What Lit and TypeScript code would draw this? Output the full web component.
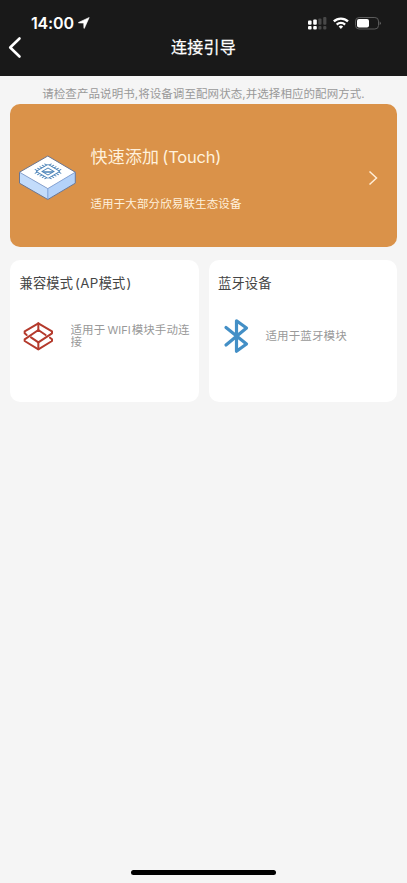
import { LitElement, html, css, svg } from "lit";
import { customElement } from "lit/decorators.js";

const chipPins = [0, 1, 2, 3, 4].map((i) => {
  const t = -8 + i * 4;
  return svg`<path d="M${t} -14V-10M${t} 10V14M-14 ${t}H-10M10 ${t}H14"/>`;
});

@customElement("app-root")
export class AppRoot extends LitElement {
  static styles = css`
    :host {
      display: flex;
      flex-direction: column;
      box-sizing: border-box;
      width: 100%;
      height: 883px;
      background: #f5f5f5;
      font-family: Inter, "Noto Sans CJK SC", sans-serif;
      overflow: hidden;
    }
    svg { display: block; flex: none; }
    .top { height: 76px; background: #191919; color: #fff; flex: none; }
    .status {
      height: 34px;
      padding: 12px 26px 0 31px;
      box-sizing: border-box;
      display: flex;
      align-items: center;
    }
    .time { font-size: 16px; font-weight: 600; line-height: 22px; letter-spacing: -0.15px; }
    .loc { margin-left: 4px; }
    .signals { margin-left: auto; }
    .nav {
      display: grid;
      grid-template-columns: 40px 1fr 40px;
      height: 26px;
      align-items: center;
    }
    .title { text-align: center; font-size: 16px; line-height: 26px; letter-spacing: 0.2px; font-weight: 400; -webkit-text-stroke: 0.25px #fff; }
    .hint {
      height: 28px;
      padding-top: 9px;
      box-sizing: border-box;
      text-align: center;
      font-size: 11.5px;
      line-height: 18px;
      letter-spacing: 0.07px;
      color: #999;
      white-space: nowrap;
      flex: none;
    }
    .cards {
      display: grid;
      grid-template-columns: 1fr 1fr;
      grid-template-rows: 143px 142px;
      gap: 13px 10px;
      padding: 0 10px;
    }
    .hero {
      grid-column: 1 / -1;
      background: #da9249;
      border-radius: 10px;
      display: flex;
      align-items: center;
      padding: 5px 19px 0 8px;
      color: #fff1dc;
    }
    .hero-text { flex: 1; margin-left: 12.5px; display: flex; flex-direction: column; gap: 25px; white-space: nowrap; }
    .hero-title { font-size: 17px; line-height: 26px; letter-spacing: 0.2px; }
    .hero-title .latin { margin-left: 3px; font-size: 16.5px; letter-spacing: -0.2px; }
    .hero-sub { font-size: 11.5px; line-height: 18px; letter-spacing: 0.12px; }
    .card {
      background: #fff;
      border-radius: 10px;
      padding: 13px 8px 0 9.5px;
      display: flex;
      flex-direction: column;
    }
    .card-title { font-size: 13.3px; line-height: 20px; letter-spacing: 0.1px; color: #454545; white-space: nowrap; }
    .card-title .latin { margin-left: 2px; letter-spacing: 0.35px; }
    .card-title .close { margin-left: 1px; }
    .row { display: flex; align-items: center; height: 40px; margin-top: 23px; }
    .desc { font-size: 11.5px; line-height: 12.5px; letter-spacing: 0.12px; color: #999; white-space: nowrap; }
    .desc .latin { margin: 0 1px 0 2px; font-size: 11px; letter-spacing: 0; }
    .line { overflow: hidden; height: 12.5px; }
    .ap-icon { margin: 2px 0 0 3px; }
    .ap { margin-left: 17px; }
    .bt { margin-left: 15.5px; }
    .home { width: 145px; height: 5px; border-radius: 3px; background: #000; margin: auto auto 8px; flex: none; }
  `;

  render() {
    return html`
      <div class="top">
        <div class="status">
          <span class="time">14:00</span>
          <svg class="loc" width="12" height="12" viewBox="0 0 12 12"><path d="M11.2.5.6 5.4q-.6.4.1.5l5 .2.2 5q.1.7.5.1Z" fill="#fff" stroke="#fff" stroke-width=".6"/></svg>
          <svg class="signals" width="73" height="14" viewBox="308 16 73 14">
            <g fill="#fff">
              <rect x="308" y="20.5" width="3.6" height="4.2" rx="1"/><rect x="313.2" y="19.5" width="3.6" height="5.2" rx="1"/>
              <rect x="308" y="26" width="3.6" height="3.6" rx="1"/><rect x="313.2" y="26" width="3.6" height="3.6" rx="1"/>
            </g>
            <g fill="#484848">
              <rect x="318.3" y="18.4" width="3.2" height="6.3" rx="1"/><rect x="323.2" y="17" width="3.2" height="7.7" rx="1"/>
              <rect x="318.3" y="26" width="3.2" height="3.6" rx="1"/><rect x="323.2" y="26" width="3.2" height="3.6" rx="1"/>
            </g>
            <g fill="none" stroke="#fff" stroke-width="2.3">
              <path d="M333.8 21.4a10.3 10.3 0 0 1 14.2 0"/><path d="M336.7 24.6a6.1 6.1 0 0 1 8.4 0"/>
            </g>
            <path d="M338.7 26.5a3.2 3.2 0 0 1 4.4 0l-2.2 2.4Z" fill="#fff"/>
            <rect x="355.5" y="17.5" width="23" height="11.5" rx="3.6" fill="none" stroke="#5c5c5c" stroke-width="1"/>
            <rect x="357" y="19" width="12" height="8.5" rx="2" fill="#fff"/>
            <path d="M379.7 21.2q2.2 2 0 4Z" fill="#666"/>
          </svg>
        </div>
        <div class="nav">
          <svg width="30" height="26" viewBox="0 0 30 26"><path d="M19.5 4.5 10.2 13.5 19.5 22.5" fill="none" stroke="#fff" stroke-width="2.6" stroke-linecap="round" stroke-linejoin="round"/></svg>
          <div class="title">连接引导</div>
        </div>
      </div>
      <div class="hint">请检查产品说明书,将设备调至配网状态,并选择相应的配网方式.</div>
      <div class="cards">
        <section class="hero">
          <svg width="60" height="48" viewBox="18 155 60 48">
            <path d="M19.5 173.2 47.8 189.6 75.3 173.2V184.2L47.8 200.5 19.5 184.2Z" fill="#c3dcfb"/>
            <path d="M47.8 189.6 75.3 173.2V184.2L47.8 200.5Z" fill="#b4d2f9"/>
            <path d="M47.8 157 75.3 173.2 47.8 189.6 19.5 173.2Z" fill="#fff"/>
            <path d="M47.8 157 75.3 173.2V184.2L47.8 200.5 19.5 184.2V173.2Z" fill="none" stroke="#6c7690" stroke-width="1"/>
            <path d="M19.5 173.2 47.8 189.6 75.3 173.2M47.8 189.6V200" fill="none" stroke="#6d93cf" stroke-width=".8"/>
            <g transform="matrix(.6 .35 -.6 .35 48 172.4)" fill="none" stroke="#4a82b8" stroke-width="1.5">
              <rect x="-10" y="-10" width="20" height="20" rx="2"/>
              <rect x="-5" y="-5" width="10" height="10"/>
              <path d="M-5 5 5-5M-2 5 5-2"/>
              ${chipPins}
            </g>
          </svg>
          <div class="hero-text">
            <div class="hero-title">快速添加<span class="latin">(Touch)</span></div>
            <div class="hero-sub">适用于大部分欣易联生态设备</div>
          </div>
          <svg width="10" height="16" viewBox="0 0 10 16"><path d="M1.5 1.5 8.5 8 1.5 14.5" fill="none" stroke="#ffedd6" stroke-width="1.5"/></svg>
        </section>
        <section class="card">
          <div class="card-title">兼容模式<span class="latin">(AP</span>模式<span class="close">)</span></div>
          <div class="row">
            <svg class="ap-icon" width="31" height="30" viewBox="69 246 93 90">
              <g fill="none" stroke="#b43a2c" stroke-width="6" stroke-linejoin="round" stroke-linecap="round">
                <path d="M80 285 74 280V274L115 250 156 274V280L115 307 93 292"/>
                <path d="M150 293 156 298V303L115 328 74 303V298L115 270 137 285"/>
                <path d="M115 250V270M115 307V328"/>
              </g>
            </svg>
            <div class="desc ap"><div class="line">适用于<span class="latin">WIFI</span>模块手动连</div><div class="line">接</div></div>
          </div>
        </section>
        <section class="card">
          <div class="card-title">蓝牙设备</div>
          <div class="row">
            <svg width="32" height="36" viewBox="0 0 32 36"><path d="M8 9.5 28.5 26 18.5 33.2V2.8L28.5 10 8 27" fill="none" stroke="#438fc6" stroke-width="3.2" stroke-linecap="round" stroke-linejoin="round"/></svg>
            <div class="desc bt">适用于蓝牙模块</div>
          </div>
        </section>
      </div>
      <div class="home"></div>
    `;
  }
}
